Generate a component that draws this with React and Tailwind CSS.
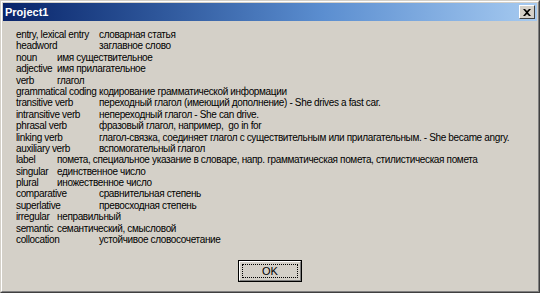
import React from "react";

const rows = [
  ["entry, lexical entry", "словарная статья", 0],
  ["headword", "заглавное слово", 0],
  ["noun", "имя существительное", 1],
  ["adjective", "имя прилагательное", 1],
  ["verb", "глагол", 1],
  ["grammatical coding", "кодирование грамматической информации", 0],
  ["transitive verb", "переходный глагол (имеющий дополнение) - She drives a fast car.", 0],
  ["intransitive verb", "непереходный глагол - She can drive.", 0],
  ["phrasal verb", "фразовый глагол, например,  go in for", 0],
  ["linking verb", "глагол-связка, соединяет глагол с существительным или прилагательным. - She became angry.", 0],
  ["auxiliary verb", "вспомогательный глагол", 0],
  ["label", "помета, специальное указание в словаре, напр. грамматическая помета, стилистическая помета", 1],
  ["singular", "единственное число", 1],
  ["plural", "иножественное число", 1],
  ["comparative", "сравнительная степень", 0],
  ["superlative", "превосходная степень", 0],
  ["irregular", "неправильный", 1],
  ["semantic", "семантический, смысловой", 1],
  ["collocation", "устойчивое словосочетание", 0],
];

export default function App() {
  return (
    <div
      className="w-[540px] h-[293px] bg-[#d4d0c8] border border-t-[#d4d0c8] border-l-[#d4d0c8] border-r-[#404040] border-b-[#404040] box-border overflow-hidden"
      style={{ fontFamily: '"Liberation Sans", Arial, sans-serif' }}
    >
      <div className="w-full h-[291px] border border-t-white border-l-white border-r-[#808080] border-b-[#808080] box-border p-px flex flex-col">
        <div className="h-[18px] shrink-0 flex items-center justify-between pl-[2px] pr-[2px] bg-gradient-to-r from-[#0a246a] via-[#5b8ed0] via-60% to-[#a6caf0]">
          <span className="text-white font-bold text-[11px] leading-none">Project1</span>
          <div className="w-[16px] h-[14px] bg-[#d4d0c8] border border-t-white border-l-white border-r-[#404040] border-b-[#404040] box-border flex items-center justify-center">
            <svg width="8" height="7" viewBox="0 0 8 7">
              <path d="M0 0h2l2 2 2-2h2L5 3.5 8 7H6L4 5 2 7H0l3-3.5z" fill="#000" />
            </svg>
          </div>
        </div>
        <div className="flex flex-col pt-[8px] pl-[13px] text-[10px] text-black tracking-[-0.35px]">
          {rows.map(([en, ru, narrow], i) => (
            <div key={i} className="h-[11.4px] leading-[11.4px] flex whitespace-pre">
              <span className={narrow ? "w-[41px] shrink-0" : "w-[83px] shrink-0"}>{en}</span>
              <span>{ru}</span>
            </div>
          ))}
        </div>
        <div className="flex justify-center mt-[15px]">
          <div className="w-[64px] h-[22px] border border-black box-border">
            <div className="w-full h-full border border-t-white border-l-white border-r-[#808080] border-b-[#808080] box-border p-[2px]">
              <div className="w-full h-full border border-dotted border-black box-border flex items-center justify-center text-[11px] text-black leading-none">
                OK
              </div>
            </div>
          </div>
        </div>
      </div>
    </div>
  );
}
